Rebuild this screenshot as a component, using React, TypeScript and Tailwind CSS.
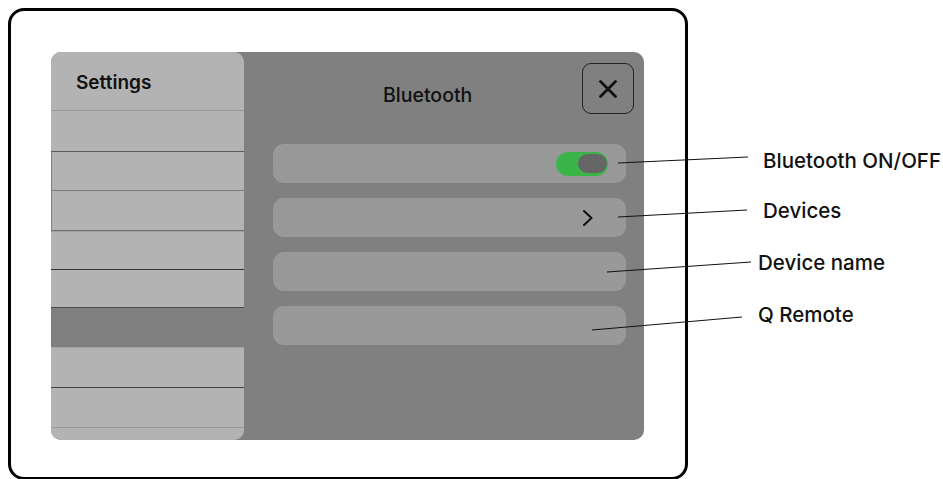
import React from 'react';

const font = { fontFamily: 'Inter, "Noto Sans", sans-serif' };

const SidebarRows: React.FC = () => {
  return (
    <div className="flex flex-col">
      <div className="h-[41px] border-b border-[#5a5a5a]" />
      <div className="h-[39px] border-b border-[#7a7a7a] border-l border-l-[#808080]" />
      <div className="h-[40px] border-b border-[#6e6e6e] border-l border-l-[#808080]" />
      <div className="h-[39px] border-t border-[#a0a0a0] border-b border-b-[#333]" />
      <div className="h-[38px] border-b border-[#4a4a4a]" />
      <div className="h-[40px] bg-[#808080] border-b border-[#a3a3a3]" />
      <div className="h-[40px] border-b border-[#444]" />
      <div className="h-[40px] border-b border-[#999]" />
    </div>
  );
};

const Toggle: React.FC = () => (
  <div className="w-[52px] h-[24px] rounded-full bg-[#3bb54a] flex items-center justify-end pr-[1px]">
    <div className="w-[29px] h-[19px] rounded-full bg-[#666]" />
  </div>
);

const Chevron: React.FC = () => (
  <svg width="12" height="18" viewBox="0 0 12 18" fill="none">
    <path d="M2 2 L9.5 9 L2 16" stroke="#111" strokeWidth="2" strokeLinecap="round" strokeLinejoin="round" />
  </svg>
);

const CloseIcon: React.FC = () => (
  <svg width="20" height="20" viewBox="0 0 20 20" fill="none">
    <path d="M2.5 2.5 L17.5 17.5 M17.5 2.5 L2.5 17.5" stroke="#111" strokeWidth="2.8" strokeLinecap="round" />
  </svg>
);

const labels = [
  { text: 'Bluetooth ON/OFF', cls: 'mt-[151px] ml-[0px]' },
  { text: 'Devices', cls: 'mt-[29px] ml-[0px]' },
  { text: 'Device name', cls: 'mt-[32px] -ml-[5px]' },
  { text: 'Q Remote', cls: 'mt-[31px] -ml-[5px]' },
];

export default function App() {
  return (
    <div className="relative w-[943px] h-[479px] overflow-hidden bg-white flex" style={font}>
      <div className="ml-[8px] mt-[8px] w-[680px] h-[472px] shrink-0 border-[3px] border-black rounded-[16px] pl-[40px] pt-[41px]">
        <div className="w-[593px] h-[388px] bg-[#808080] rounded-[10px] overflow-hidden flex">
          <div className="w-[193px] h-full bg-[#b3b3b3] rounded-r-[10px] flex flex-col">
            <div className="h-[59px] shrink-0 border-b border-[#999] pl-[25px] pt-[19px]">
              <span className="text-[19px] font-semibold text-[#111] leading-none">Settings</span>
            </div>
            <SidebarRows />
          </div>
          <div className="flex-1 flex flex-col pt-[11px] pr-[10px]">
            <div className="flex items-start">
              <h2 className="ml-[139px] mt-[23px] text-[19.5px] font-medium text-[#111] leading-none">Bluetooth</h2>
              <button className="ml-auto w-[52px] h-[51px] border border-[#222] rounded-[9px] flex items-center justify-center">
                <CloseIcon />
              </button>
            </div>
            <div className="mt-[30px] ml-[29px] mr-[8px] flex flex-col gap-[15px]">
              <div className="h-[39px] rounded-[11px] bg-[#999] flex items-center justify-end pr-[18px]">
                <Toggle />
              </div>
              <div className="h-[39px] rounded-[11px] bg-[#999] flex items-center justify-end pr-[32px]">
                <Chevron />
              </div>
              <div className="h-[39px] rounded-[11px] bg-[#999]" />
              <div className="h-[39px] rounded-[11px] bg-[#999]" />
            </div>
          </div>
        </div>
      </div>
      <div className="ml-[75px] flex flex-col">
        {labels.map((l) => (
          <div key={l.text} className={`${l.cls} text-[20.5px] font-medium text-[#111] leading-none whitespace-nowrap`}>
            {l.text}
          </div>
        ))}
      </div>
      <svg className="absolute inset-0 pointer-events-none" width="943" height="479">
        <g stroke="#111" strokeWidth="1.2">
          <line x1="618" y1="163" x2="748" y2="157" />
          <line x1="618" y1="217" x2="747" y2="210" />
          <line x1="607" y1="272" x2="751" y2="262" />
          <line x1="592" y1="330" x2="742" y2="317" />
        </g>
      </svg>
    </div>
  );
}
